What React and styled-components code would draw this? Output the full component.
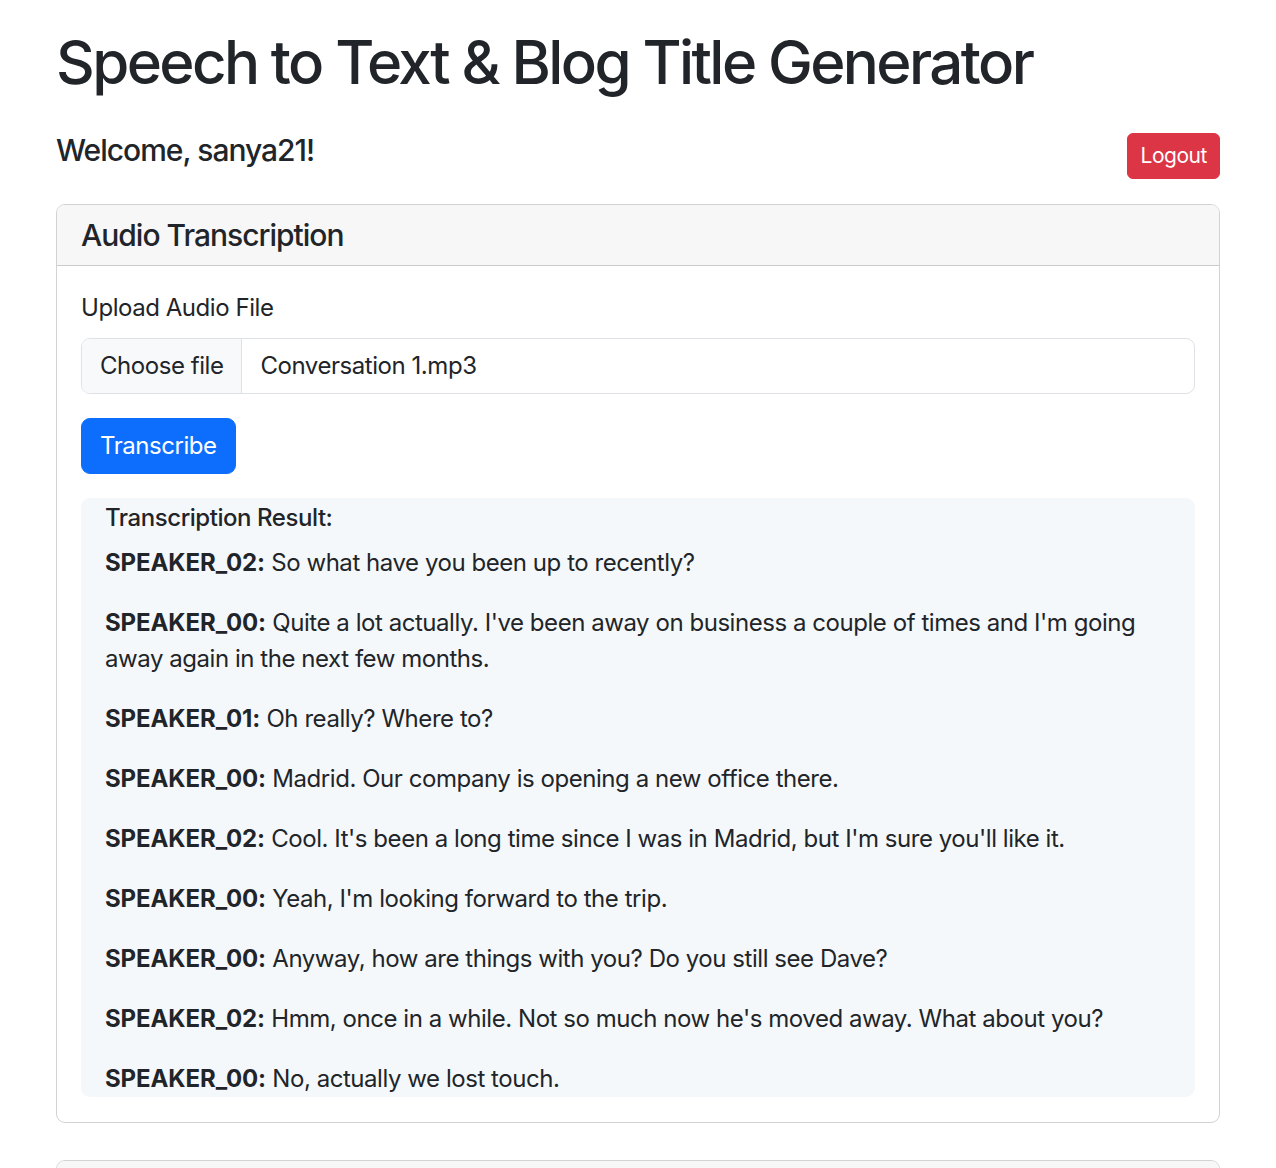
import styled, { createGlobalStyle } from "styled-components";

const GlobalStyle = createGlobalStyle`
    * { box-sizing: border-box; }
    body {
        margin: 0;
        background: #fff;
        color: #212529;
        font-family: Inter, "Noto Sans", "Liberation Sans", sans-serif;
        font-size: 24px;
        line-height: 1.5;
        letter-spacing: -0.45px;
    }
`;

const Page = styled.div`
    padding: 26px 56px 0;
`;

const Title = styled.h1`
    margin: 0 0 34px;
    font-size: 60px;
    font-weight: 500;
    line-height: 1.2;
    letter-spacing: -2.6px;
`;

const TopRow = styled.div`
    display: flex;
    justify-content: space-between;
    align-items: center;
    margin-bottom: 24px;
`;

const Welcome = styled.h5`
    margin: 0 0 12px;
    font-size: 30px;
    font-weight: 500;
    line-height: 1.2;
    letter-spacing: -1px;
`;

const Button = styled.button`
    border: 1.5px solid ${(p) => p.$color};
    background: ${(p) => p.$color};
    color: #fff;
    font-family: inherit;
    letter-spacing: inherit;
    font-size: ${(p) => (p.$small ? "21px" : "24px")};
    line-height: 1.5;
    padding: ${(p) => (p.$small ? "6px 12px" : "9px 18px")};
    border-radius: ${(p) => (p.$small ? "6px" : "9px")};
    cursor: pointer;
`;

const Card = styled.section`
    border: 1px solid rgba(0, 0, 0, 0.175);
    border-radius: 9px;
    margin-bottom: 37px;
    overflow: hidden;
`;

const CardHeader = styled.div`
    background: #f7f7f7;
    border-bottom: 1px solid rgba(0, 0, 0, 0.175);
    padding: 12px 24px;
`;

const CardTitle = styled.h5`
    margin: 0;
    font-size: 30px;
    font-weight: 500;
    line-height: 1.2;
    letter-spacing: -1px;
`;

const CardBody = styled.div`
    padding: 24px 24px 25px;
`;

const Label = styled.label`
    display: block;
    margin-bottom: 12px;
`;

const FileInput = styled.div`
    display: flex;
    border: 1px solid #dee2e6;
    border-radius: 9px;
    overflow: hidden;
    margin-bottom: 24px;
`;

const FileButton = styled.span`
    background: #f8f9fa;
    border-right: 1px solid #dee2e6;
    padding: 9px 18px;
`;

const FileName = styled.span`
    padding: 9px 18px;
`;

const Result = styled.div`
    margin-top: 24px;
    background: #f5f8fa;
    border-radius: 9px;
    padding: 6px 24px 0;
`;

const ResultTitle = styled.h6`
    margin: 0 0 12px;
    font-size: 24px;
    font-weight: 500;
    line-height: 1.2;
`;

const Line = styled.p`
    margin: 0 0 24px;
    &:last-child { margin-bottom: 0; }
`;

const Speaker = styled.strong`
    font-weight: 700;
    letter-spacing: -0.1px;
`;

const lines = [
    ["SPEAKER_02", "So what have you been up to recently?"],
    ["SPEAKER_00", "Quite a lot actually. I've been away on business a couple of times and I'm going away again in the next few months."],
    ["SPEAKER_01", "Oh really? Where to?"],
    ["SPEAKER_00", "Madrid. Our company is opening a new office there."],
    ["SPEAKER_02", "Cool. It's been a long time since I was in Madrid, but I'm sure you'll like it."],
    ["SPEAKER_00", "Yeah, I'm looking forward to the trip."],
    ["SPEAKER_00", "Anyway, how are things with you? Do you still see Dave?"],
    ["SPEAKER_02", "Hmm, once in a while. Not so much now he's moved away. What about you?"],
    ["SPEAKER_00", "No, actually we lost touch."],
];

export default function App() {
    return (
        <Page>
            <GlobalStyle />
            <Title>Speech to Text &amp; Blog Title Generator</Title>
            <TopRow>
                <Welcome>Welcome, sanya21!</Welcome>
                <Button $small $color="#dc3545">Logout</Button>
            </TopRow>
            <Card>
                <CardHeader>
                    <CardTitle>Audio Transcription</CardTitle>
                </CardHeader>
                <CardBody>
                    <Label>Upload Audio File</Label>
                    <FileInput>
                        <FileButton>Choose file</FileButton>
                        <FileName>Conversation 1.mp3</FileName>
                    </FileInput>
                    <Button $color="#0d6efd">Transcribe</Button>
                    <Result>
                        <ResultTitle>Transcription Result:</ResultTitle>
                        {lines.map(([who, text], idx) => (
                            <Line key={idx}>
                                <Speaker>{who}:</Speaker> {text}
                            </Line>
                        ))}
                    </Result>
                </CardBody>
            </Card>
            <Card>
                <CardHeader>
                    <CardTitle>Blog Title Generator</CardTitle>
                </CardHeader>
            </Card>
        </Page>
    );
}
